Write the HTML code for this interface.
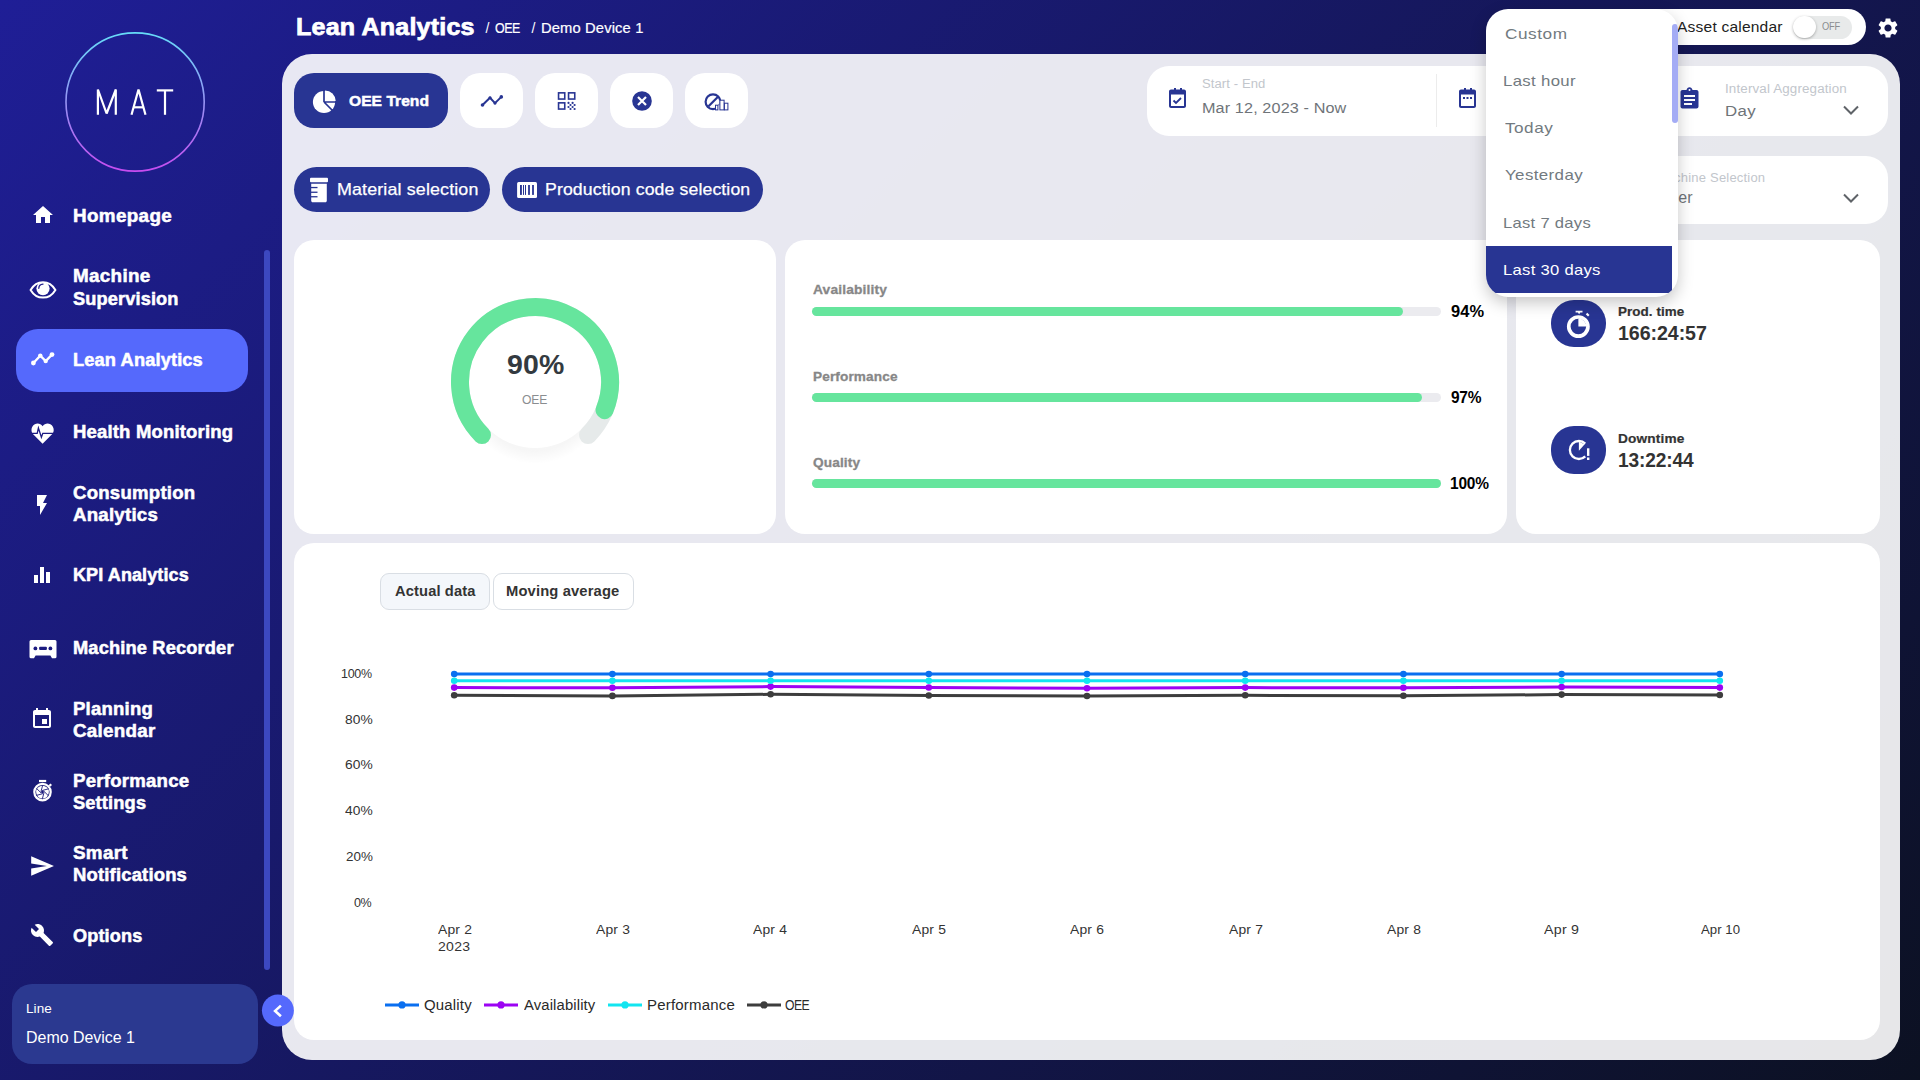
<!DOCTYPE html><html><head><meta charset="utf-8"><style>
html,body{margin:0;padding:0;}
html{width:1920px;height:1080px;}
body{width:1920px;height:1080px;overflow:hidden;position:relative;font-family:"Liberation Sans", sans-serif;
background:linear-gradient(135deg,#1f1e96 0%,#0c1122 100%);}
.t{position:absolute;line-height:1;white-space:nowrap;}
.r{position:absolute;}
</style></head><body>
<svg class="r" style="left:60px;top:27px;" width="150" height="150" viewBox="0 0 150 150"><defs><linearGradient id="lg" x1="0" y1="0" x2="0" y2="1"><stop offset="0" stop-color="#66dcf8"/><stop offset="1" stop-color="#c74cf0"/></linearGradient></defs>
<circle cx="75.1" cy="75" r="69.1" fill="none" stroke="url(#lg)" stroke-width="1.6"/>
<g fill="none" stroke="#fff" stroke-width="2.2" stroke-linejoin="bevel">
<polyline points="37.9,87.8 37.9,62.5 46.6,86.5 55.8,62.5 55.8,87.8" transform="translate(0,0)"/>
<polyline points="71.5,87.8 78.5,62.5 85.5,87.8"/>
<line x1="74" y1="80.3" x2="83" y2="80.3"/>
<line x1="96.8" y1="63.4" x2="113.2" y2="63.4"/>
<line x1="105" y1="63.4" x2="105" y2="87.8"/>
</g></svg>
<div class="r" style="left:16px;top:329px;width:232px;height:63px;background:#5569fc;border-radius:22px;"></div>
<div class="t" style="left:72.58px;top:208.19px;font-size:17.5px;font-weight:700;color:#fff;letter-spacing:0.317px;transform:scaleX(1.0766);transform-origin:0 0;-webkit-text-stroke:0.5px #fff;">Homepage</div>
<div class="t" style="left:72.58px;top:268.49px;font-size:17.5px;font-weight:700;color:#fff;letter-spacing:0.289px;transform:scaleX(1.0762);transform-origin:0 0;-webkit-text-stroke:0.5px #fff;">Machine</div>
<div class="t" style="left:72.59px;top:290.69px;font-size:17.5px;font-weight:700;color:#fff;letter-spacing:0.130px;transform:scaleX(1.0395);transform-origin:0 0;-webkit-text-stroke:0.5px #fff;">Supervision</div>
<div class="t" style="left:72.59px;top:352.09px;font-size:17.5px;font-weight:700;color:#fff;letter-spacing:0.130px;transform:scaleX(1.0418);transform-origin:0 0;-webkit-text-stroke:0.5px #fff;">Lean Analytics</div>
<div class="t" style="left:72.59px;top:423.69px;font-size:17.5px;font-weight:700;color:#fff;letter-spacing:0.170px;transform:scaleX(1.0562);transform-origin:0 0;-webkit-text-stroke:0.5px #fff;">Health Monitoring</div>
<div class="t" style="left:72.58px;top:484.89px;font-size:17.5px;font-weight:700;color:#fff;letter-spacing:0.228px;transform:scaleX(1.0623);transform-origin:0 0;-webkit-text-stroke:0.5px #fff;">Consumption</div>
<div class="t" style="left:72.58px;top:506.99px;font-size:17.5px;font-weight:700;color:#fff;letter-spacing:0.209px;transform:scaleX(1.0665);transform-origin:0 0;-webkit-text-stroke:0.5px #fff;">Analytics</div>
<div class="t" style="left:72.59px;top:567.49px;font-size:17.5px;font-weight:700;color:#fff;letter-spacing:0.092px;transform:scaleX(1.0303);transform-origin:0 0;-webkit-text-stroke:0.5px #fff;">KPI Analytics</div>
<div class="t" style="left:72.59px;top:639.69px;font-size:17.5px;font-weight:700;color:#fff;letter-spacing:0.144px;transform:scaleX(1.0431);transform-origin:0 0;-webkit-text-stroke:0.5px #fff;">Machine Recorder</div>
<div class="t" style="left:72.58px;top:700.69px;font-size:17.5px;font-weight:700;color:#fff;letter-spacing:0.205px;transform:scaleX(1.0600);transform-origin:0 0;-webkit-text-stroke:0.5px #fff;">Planning</div>
<div class="t" style="left:72.58px;top:722.69px;font-size:17.5px;font-weight:700;color:#fff;letter-spacing:0.258px;transform:scaleX(1.0741);transform-origin:0 0;-webkit-text-stroke:0.5px #fff;">Calendar</div>
<div class="t" style="left:72.58px;top:772.69px;font-size:17.5px;font-weight:700;color:#fff;letter-spacing:0.221px;transform:scaleX(1.0631);transform-origin:0 0;-webkit-text-stroke:0.5px #fff;">Performance</div>
<div class="t" style="left:72.59px;top:794.69px;font-size:17.5px;font-weight:700;color:#fff;letter-spacing:0.140px;transform:scaleX(1.0432);transform-origin:0 0;-webkit-text-stroke:0.5px #fff;">Settings</div>
<div class="t" style="left:72.58px;top:844.69px;font-size:17.5px;font-weight:700;color:#fff;letter-spacing:0.301px;transform:scaleX(1.0741);transform-origin:0 0;-webkit-text-stroke:0.5px #fff;">Smart</div>
<div class="t" style="left:72.59px;top:866.69px;font-size:17.5px;font-weight:700;color:#fff;letter-spacing:0.160px;transform:scaleX(1.0554);transform-origin:0 0;-webkit-text-stroke:0.5px #fff;">Notifications</div>
<div class="t" style="left:72.59px;top:927.89px;font-size:17.5px;font-weight:700;color:#fff;letter-spacing:0.131px;transform:scaleX(1.0361);transform-origin:0 0;-webkit-text-stroke:0.5px #fff;">Options</div>
<svg class="r" style="left:30.5px;top:202.6px;" width="24" height="24" viewBox="0 0 24 24"><path fill="#fff" d="M10 20v-6h4v6h5v-8h3L12 3 2 12h3v8z"/></svg>
<svg class="r" style="left:28.5px;top:279.5px;" width="28" height="20" viewBox="0 0 28 20"><path d="M14 2.2C8.5 2.2 4 5.8 1.6 9.9 4 14 8.5 17.6 14 17.6s10-3.6 12.4-7.7C24 5.8 19.5 2.2 14 2.2z" fill="none" stroke="#fff" stroke-width="2"/><circle cx="14" cy="8.6" r="6.6" fill="#fff"/><path d="M9.8 8.3A4.4 4.4 0 0 1 14 4.1" fill="none" stroke="#1e1c8c" stroke-width="1.3" stroke-linecap="round"/></svg>
<svg class="r" style="left:30px;top:350px;" width="26" height="16" viewBox="0 0 26 16"><polyline points="3.4,13 10.3,5.6 15.7,11.1 22,4.6" fill="none" stroke="#fff" stroke-width="2.3"/><circle cx="3.4" cy="13" r="2.4" fill="#fff"/><circle cx="10.3" cy="5.6" r="2.2" fill="#fff"/><circle cx="15.7" cy="11.1" r="2.2" fill="#fff"/><circle cx="22" cy="4.6" r="2.4" fill="#fff"/></svg>
<svg class="r" style="left:31px;top:423px;" width="24" height="22" viewBox="0 0 24 22"><path fill="#fff" d="M11.6 20.7L2.4 11.6C-0.6 8.6 0 3.3 3.8 1.2 6.8-0.4 9.8 0.8 11.6 3.2 13.4 0.8 16.4-0.4 19.4 1.2 23.2 3.3 23.8 8.6 20.8 11.6z"/><polyline points="-1,10.3 6.2,10.3 7.4,5 10.4,14.2 11.8,10.3 25,10.3" fill="none" stroke="#1c1b82" stroke-width="1.3"/></svg>
<svg class="r" style="left:30px;top:493px;" width="24" height="24" viewBox="0 0 24 24"><path fill="#fff" d="M7 2v11h3v9l7-12h-4l4-8z" transform="translate(0,0) scale(1)"/></svg>
<svg class="r" style="left:29.7px;top:563.2px;" width="24" height="24" viewBox="0 0 24 24"><path fill="#fff" d="M10 20h4V4h-4v16zm-6 0h4v-8H4v8zM16 9v11h4V9h-4z"/></svg>
<svg class="r" style="left:28.5px;top:639.8px;" width="28" height="19" viewBox="0 0 28 19"><path fill="#fff" d="M2 0.1H26A1.5 1.5 0 0 1 27.5 1.6V16.7A1.5 1.5 0 0 1 26 18.2H23L21.4 15.6H6.6L5 18.2H2A1.5 1.5 0 0 1 0.5 16.7V1.6A1.5 1.5 0 0 1 2 0.1z"/><g fill="#1c1b80"><circle cx="6.4" cy="8.4" r="1.9"/><rect x="10.1" y="6.7" width="7.8" height="3.4" rx="1"/><circle cx="21.4" cy="8.4" r="1.9"/></g></svg>
<svg class="r" style="left:30.2px;top:707px;" width="24" height="24" viewBox="0 0 24 24"><path fill="#fff" d="M17 12h-5v5h5v-5zM16 1v2H8V1H6v2H5c-1.11 0-1.99.9-1.99 2L3 19c0 1.1.89 2 2 2h14c1.1 0 2-.9 2-2V5c0-1.1-.9-2-2-2h-1V1h-2zm3 18H5V8h14v11z"/></svg>
<svg class="r" style="left:31px;top:778px;" width="24" height="25" viewBox="0 0 24 25"><rect x="8" y="1.9" width="7.2" height="2.2" fill="#fff"/><path d="M17.6 7.2l1.8-1.8 1.6 1.6-1.8 1.8z" fill="#fff"/><circle cx="11.5" cy="14.1" r="8.2" fill="none" stroke="#fff" stroke-width="2.2"/><circle cx="11.5" cy="14.1" r="6.4" fill="#fff"/><g stroke="#1c1b7c" stroke-width="0.9"><line x1="13.05" y1="14.51" x2="11.34" y2="20.89"/><line x1="11.91" y1="15.65" x2="5.54" y2="17.35"/><line x1="10.37" y1="15.23" x2="5.70" y2="10.56"/><line x1="9.95" y1="13.69" x2="11.66" y2="7.31"/><line x1="11.09" y1="12.55" x2="17.46" y2="10.85"/><line x1="12.63" y1="12.97" x2="17.30" y2="17.64"/></g><circle cx="11.5" cy="14.1" r="1.4" fill="#1c1b7c"/></svg>
<svg class="r" style="left:28.9px;top:852.8px;" width="26" height="26" viewBox="0 0 26 26"><path fill="#fff" transform="scale(1.085)" d="M2.01 21L23 12 2.01 3 2 9.6l14.5 2.4L2 14.4z"/></svg>
<svg class="r" style="left:29.8px;top:922.6px;" width="24" height="24" viewBox="0 0 24 24"><path fill="#fff" d="M22.7 19l-9.1-9.1c.9-2.3.4-5-1.5-6.9-2-2-5-2.4-7.4-1.3L9 6 6 9 1.6 4.7C.4 7.1.9 10.1 2.9 12.1c1.9 1.9 4.6 2.4 6.9 1.5l9.1 9.1c.4.4 1 .4 1.4 0l2.3-2.3c.5-.4.5-1.1.1-1.4z"/></svg>
<div class="r" style="left:264px;top:250px;width:6px;height:720px;background:#3c48c0;border-radius:3px;"></div>
<div class="r" style="left:12px;top:984px;width:246px;height:80px;background:#2b3990;border-radius:20px;"></div>
<div class="t" style="left:26.34px;top:1002.40px;font-size:13px;font-weight:400;color:#fff;letter-spacing:0.098px;transform:scaleX(1.0389);transform-origin:0 0;">Line</div>
<div class="t" style="left:26.39px;top:1030.16px;font-size:16px;font-weight:400;color:#fff;letter-spacing:-0.008px;transform:scaleX(0.9972);transform-origin:0 0;">Demo Device 1</div>
<div class="t" style="left:296.33px;top:14.88px;font-size:24px;font-weight:700;color:#fff;letter-spacing:0.186px;transform:scaleX(1.0441);transform-origin:0 0;-webkit-text-stroke:0.75px #fff;">Lean Analytics</div>
<div class="t" style="left:485.50px;top:21.15px;font-size:14px;font-weight:400;color:#fff;">/</div>
<div class="t" style="left:494.68px;top:21.15px;font-size:14px;font-weight:400;color:#fff;letter-spacing:-0.570px;transform:scaleX(0.8866);transform-origin:0 0;-webkit-text-stroke:0.2px #fff;">OEE</div>
<div class="t" style="left:531.50px;top:21.15px;font-size:14px;font-weight:400;color:#fff;">/</div>
<div class="t" style="left:540.76px;top:21.15px;font-size:14px;font-weight:400;color:#fff;letter-spacing:0.134px;transform:scaleX(1.0517);transform-origin:0 0;-webkit-text-stroke:0.2px #fff;">Demo Device 1</div>
<div class="r" style="left:282px;top:54px;width:1618px;height:1006px;background:rgba(255,255,255,0.9);border-radius:30px;"></div>
<div class="r" style="left:294px;top:73px;width:154px;height:55px;background:#283593;border-radius:20px;"></div>
<svg class="r" style="left:311px;top:88.6px;" width="27" height="27" viewBox="0 0 27 27"><circle cx="13" cy="13" r="11.1" fill="#fff"/><g stroke="#283593" stroke-width="1.7" fill="none"><path d="M13 13V0.5M13 13H25.5M13 13L22.5 22.5"/></g><path d="M14 12V1.4A11 11 0 0 1 24.7 12z" fill="#fff"/></svg>
<div class="t" style="left:348.79px;top:93.38px;font-size:15.5px;font-weight:700;color:#fff;letter-spacing:0.022px;transform:scaleX(1.0067);transform-origin:0 0;-webkit-text-stroke:0.5px #fff;">OEE Trend</div>
<div class="r" style="left:460px;top:73px;width:63px;height:55px;background:#fff;border-radius:20px;"></div>
<div class="r" style="left:535px;top:73px;width:63px;height:55px;background:#fff;border-radius:20px;"></div>
<div class="r" style="left:610px;top:73px;width:63px;height:55px;background:#fff;border-radius:20px;"></div>
<div class="r" style="left:685px;top:73px;width:63px;height:55px;background:#fff;border-radius:20px;"></div>
<svg class="r" style="left:480px;top:89px;" width="24" height="24" viewBox="0 0 24 24"><polyline points="2.5,16 10,8.75 15,14.1 21.3,7.9" fill="none" stroke="#283593" stroke-width="2"/><circle cx="2.5" cy="16" r="1.8" fill="#283593"/><circle cx="10" cy="8.75" r="1.6" fill="#283593"/><circle cx="15" cy="14.1" r="1.6" fill="#283593"/><circle cx="21.3" cy="7.9" r="1.8" fill="#283593"/></svg>
<svg class="r" style="left:556px;top:91px;" width="22" height="22" viewBox="0 0 22 22"><g fill="none" stroke="#283593" stroke-width="1.6"><rect x="2.55" y="1.85" width="6.2" height="6.2"/><rect x="12.55" y="1.85" width="6.2" height="6.2"/><rect x="2.55" y="11.85" width="6.2" height="6.2"/></g><g fill="#283593"><circle cx="12.5" cy="11.9" r="1.1"/><circle cx="16.6" cy="11.9" r="1.1"/><circle cx="14.5" cy="14" r="1.1"/><circle cx="18.6" cy="14" r="1.1"/><circle cx="12.5" cy="16" r="1.1"/><circle cx="16.6" cy="16" r="1.1"/><circle cx="14.5" cy="18" r="1.1"/><circle cx="18.6" cy="18" r="1.1"/></g></svg>
<svg class="r" style="left:631px;top:90px;" width="22" height="22" viewBox="0 0 22 22"><circle cx="11" cy="11" r="9.8" fill="#283593"/><path d="M7 7l8 8M15 7l-8 8" stroke="#fff" stroke-width="2.2"/></svg>
<svg class="r" style="left:703px;top:90px;" width="28" height="24" viewBox="0 0 28 24"><circle cx="10" cy="11.8" r="7.4" fill="none" stroke="#283593" stroke-width="2.2"/><line x1="5.3" y1="16.6" x2="15" y2="6.8" stroke="#283593" stroke-width="2.2"/><path d="M12 15.2H16.4V10.2H21.6V13.2H25.4V20.4H12z" fill="#fff"/><g fill="none" stroke="#283593" stroke-width="1"><rect x="12.5" y="15.2" width="2.4" height="4.7"/><rect x="16.9" y="10.2" width="4.2" height="9.7"/><rect x="21.4" y="13.2" width="3.5" height="6.7"/></g></svg>
<div class="r" style="left:294px;top:167px;width:196px;height:45px;background:#283593;border-radius:22.5px;"></div>
<svg class="r" style="left:309px;top:176px;" width="20" height="28" viewBox="0 0 20 28"><rect x="1" y="1.8" width="18" height="4.5" rx="1" fill="#fff"/><path fill="#fff" d="M2.2 7.7h15.6v17c0 .8-.7 1.5-1.5 1.5H3.7c-.8 0-1.5-.7-1.5-1.5z"/><g fill="#283593"><rect x="2" y="10.9" width="6.5" height="1.3"/><rect x="2" y="15.6" width="6.5" height="1.3"/><rect x="2" y="20.1" width="6.5" height="1.3"/></g></svg>
<div class="t" style="left:336.97px;top:181.36px;font-size:17px;font-weight:400;color:#fff;letter-spacing:0.129px;transform:scaleX(1.0511);transform-origin:0 0;-webkit-text-stroke:0.25px #fff;">Material selection</div>
<div class="r" style="left:502px;top:167px;width:261px;height:45px;background:#283593;border-radius:22.5px;"></div>
<svg class="r" style="left:517px;top:182px;" width="21" height="17" viewBox="0 0 21 17"><rect x="0.1" y="0" width="19.9" height="16" rx="1.5" fill="#fff"/><g fill="#283593"><rect x="3" y="3" width="1.9" height="9.9"/><rect x="6" y="3" width="1" height="9.9"/><rect x="8" y="3" width="1" height="9.9"/><rect x="11.1" y="3" width="1.8" height="9.9"/><rect x="15.1" y="3" width="1.8" height="9.9"/></g></svg>
<div class="t" style="left:544.98px;top:181.36px;font-size:17px;font-weight:400;color:#fff;letter-spacing:0.107px;transform:scaleX(1.0403);transform-origin:0 0;-webkit-text-stroke:0.25px #fff;">Production code selection</div>
<div class="r" style="left:1147px;top:66px;width:741px;height:70px;background:#fff;border-radius:22px;"></div>
<svg class="r" style="left:1167px;top:87px;" width="22" height="22" viewBox="0 0 22 22"><path fill="#283593" d="M5 2.5h2V1h2v1.5h4V1h2v1.5h2c1.1 0 2 .9 2 2V19c0 1.1-.9 2-2 2H4c-1.1 0-2-.9-2-2V4.5c0-1.1.9-2 2-2zm-1 5V19h13V7.5z"/><path d="M6.5 13.5l2.5 2.5 5-5" fill="none" stroke="#283593" stroke-width="1.8"/></svg>
<div class="t" style="left:1202.35px;top:77.82px;font-size:12.5px;font-weight:400;color:#c2c6cc;letter-spacing:0.086px;transform:scaleX(1.0449);transform-origin:0 0;">Start - End</div>
<div class="t" style="left:1202.35px;top:99.98px;font-size:15.5px;font-weight:400;color:#6f7479;letter-spacing:0.117px;transform:scaleX(1.0447);transform-origin:0 0;">Mar 12, 2023 - Now</div>
<div class="r" style="left:1436px;top:74px;width:1px;height:53px;background:#ececec;border-radius:0px;"></div>
<svg class="r" style="left:1457px;top:87px;" width="22" height="22" viewBox="0 0 22 22"><path fill="#283593" d="M5 2.5h2V1h2v1.5h4V1h2v1.5h2c1.1 0 2 .9 2 2V19c0 1.1-.9 2-2 2H4c-1.1 0-2-.9-2-2V4.5c0-1.1.9-2 2-2zm-1 5V19h13V7.5z"/><g fill="#283593"><rect x="6" y="10" width="2" height="2"/><rect x="9.5" y="10" width="2" height="2"/><rect x="13" y="10" width="2" height="2"/></g></svg>
<svg class="r" style="left:1679px;top:86px;" width="22" height="24" viewBox="0 0 22 24"><path fill="#283593" d="M3.5 4h4c.3-1.6 1.6-2.8 3-2.8s2.7 1.2 3 2.8h4c1.1 0 2 .9 2 2v14.5c0 1.1-.9 2-2 2h-14c-1.1 0-2-.9-2-2V6c0-1.1.9-2 2-2z"/><circle cx="10.5" cy="4" r="1" fill="#fff"/><g fill="#fff"><rect x="5" y="9" width="11" height="2"/><rect x="5" y="13" width="11" height="2"/><rect x="5" y="17" width="8" height="2"/></g></svg>
<div class="t" style="left:1725.33px;top:82.72px;font-size:12.5px;font-weight:400;color:#c2c6cc;letter-spacing:0.133px;transform:scaleX(1.0708);transform-origin:0 0;">Interval Aggregation</div>
<div class="t" style="left:1725.32px;top:102.68px;font-size:15.5px;font-weight:400;color:#6f7479;letter-spacing:0.372px;transform:scaleX(1.0849);transform-origin:0 0;">Day</div>
<svg class="r" style="left:1842px;top:104px;" width="18" height="12" viewBox="0 0 18 12"><polyline points="2,2.5 9,9.5 16,2.5" fill="none" stroke="#5f6368" stroke-width="2"/></svg>
<div class="r" style="left:1560px;top:156px;width:328px;height:68px;background:#fff;border-radius:22px;"></div>
<div class="t" style="left:1565.30px;top:171.00px;font-size:13px;font-weight:400;color:#c2c6cc;letter-spacing:0.2px;width:200px;text-align:right;">Machine Selection</div>
<div class="t" style="left:1493.00px;top:189.76px;font-size:16px;font-weight:400;color:#6f7479;letter-spacing:0.3px;width:200px;text-align:right;">Filler</div>
<svg class="r" style="left:1842px;top:192px;" width="18" height="12" viewBox="0 0 18 12"><polyline points="2,2.5 9,9.5 16,2.5" fill="none" stroke="#5f6368" stroke-width="2"/></svg>
<div class="r" style="left:294px;top:240px;width:482px;height:294px;background:#fff;border-radius:20px;"></div>
<div class="r" style="left:785px;top:240px;width:722px;height:294px;background:#fff;border-radius:20px;"></div>
<div class="r" style="left:1516px;top:240px;width:364px;height:294px;background:#fff;border-radius:20px;"></div>
<div class="r" style="left:294px;top:543px;width:1586px;height:497px;background:#fff;border-radius:20px;"></div>
<svg class="r" style="left:0;top:0" width="1920" height="1080" viewBox="0 0 1920 1080">
<defs><radialGradient id="gs" cx="0.5" cy="0.5" r="0.5"><stop offset="0.82" stop-color="#000" stop-opacity="0.035"/><stop offset="1" stop-color="#000" stop-opacity="0"/></radialGradient></defs>
<circle cx="535" cy="392" r="72" fill="url(#gs)"/>
<circle cx="535" cy="382" r="66" fill="#fff"/>
<path d="M481.97 435.03 A75 75 0 1 1 588.03 435.03" fill="none" stroke="#e6eaea" stroke-width="18" stroke-linecap="round"/>
<path d="M481.97 435.03 A75 75 0 1 1 604.54 410.10" fill="none" stroke="#66e59d" stroke-width="18" stroke-linecap="round"/>
</svg>
<div class="t" style="left:506.59px;top:351.30px;font-size:28px;font-weight:700;color:#333a40;letter-spacing:0.149px;transform:scaleX(1.0163);transform-origin:0 0;">90%</div>
<div class="t" style="left:522.01px;top:393.62px;font-size:12.5px;font-weight:400;color:#8a8d90;letter-spacing:-0.127px;transform:scaleX(0.9710);transform-origin:0 0;">OEE</div>
<div class="t" style="left:812.58px;top:282.90px;font-size:13px;font-weight:700;color:#878787;letter-spacing:0.126px;transform:scaleX(1.0622);transform-origin:0 0;-webkit-text-stroke:0.3px #878787;">Availability</div>
<div class="r" style="left:811.8px;top:306.9px;width:629px;height:9px;background:#ebebef;border-radius:4.5px;"></div>
<div class="r" style="left:811.8px;top:306.9px;width:590.8px;height:9px;background:#66e59d;border-radius:4.5px;"></div>
<div class="t" style="left:1451.00px;top:303.10px;font-size:16.3px;font-weight:700;color:#000;letter-spacing:0.050px;transform:scaleX(1.0094);transform-origin:0 0;">94%</div>
<div class="t" style="left:812.59px;top:370.30px;font-size:13px;font-weight:700;color:#878787;letter-spacing:0.122px;transform:scaleX(1.0471);transform-origin:0 0;-webkit-text-stroke:0.3px #878787;">Performance</div>
<div class="r" style="left:811.8px;top:393.0px;width:629px;height:9px;background:#ebebef;border-radius:4.5px;"></div>
<div class="r" style="left:811.8px;top:393.0px;width:610.0px;height:9px;background:#66e59d;border-radius:4.5px;"></div>
<div class="t" style="left:1451.00px;top:389.20px;font-size:16.3px;font-weight:700;color:#000;letter-spacing:-0.269px;transform:scaleX(0.9504);transform-origin:0 0;">97%</div>
<div class="t" style="left:812.59px;top:456.30px;font-size:13px;font-weight:700;color:#878787;letter-spacing:0.122px;transform:scaleX(1.0507);transform-origin:0 0;-webkit-text-stroke:0.3px #878787;">Quality</div>
<div class="r" style="left:811.8px;top:478.5px;width:629px;height:9px;background:#ebebef;border-radius:4.5px;"></div>
<div class="r" style="left:811.8px;top:478.5px;width:629.2px;height:9px;background:#66e59d;border-radius:4.5px;"></div>
<div class="t" style="left:1450.05px;top:474.70px;font-size:16.3px;font-weight:700;color:#000;letter-spacing:-0.231px;transform:scaleX(0.9502);transform-origin:0 0;">100%</div>
<div class="r" style="left:1551px;top:300px;width:55px;height:47px;background:#283593;border-radius:23px;"></div>
<svg class="r" style="left:1564px;top:306px;" width="30" height="34" viewBox="0 0 30 34"><path d="M11.6 4.8h6.9v1.8h-2.2l-1.2 1.6-1.2-1.6h-2.3z" fill="#fff"/><path d="M21.8 8.2l1.5-1.5 2.2 2.2-1.5 1.5z" fill="#fff"/><circle cx="14.35" cy="20.60" r="9.6" fill="none" stroke="#fff" stroke-width="3.7"/><path d="M14.35 20.60V12.60A8 8 0 0 1 22.35 20.60z" fill="#fff"/></svg>
<div class="t" style="left:1617.98px;top:305.40px;font-size:13px;font-weight:700;color:#333;letter-spacing:0.074px;transform:scaleX(1.0320);transform-origin:0 0;-webkit-text-stroke:0.2px #333;">Prod. time</div>
<div class="t" style="left:1618.01px;top:323.07px;font-size:20px;font-weight:700;color:#333;letter-spacing:-0.073px;transform:scaleX(0.9808);transform-origin:0 0;">166:24:57</div>
<div class="r" style="left:1551px;top:426px;width:55px;height:48px;background:#283593;border-radius:23px;"></div>
<svg class="r" style="left:1564px;top:436px;" width="28" height="28" viewBox="0 0 28 28"><path d="M21.26 20.36A9 9 0 1 1 21.26 7.64" fill="none" stroke="#fff" stroke-width="2.3"/><path d="M14.90 14.80L14.90 5.80L20.70 8.20z" fill="#fff"/><rect x="23" y="12.3" width="2.4" height="7.6" fill="#fff"/><rect x="23" y="21.5" width="2.4" height="2.5" fill="#fff"/></svg>
<div class="t" style="left:1617.97px;top:432.20px;font-size:13px;font-weight:700;color:#333;letter-spacing:0.150px;transform:scaleX(1.0516);transform-origin:0 0;-webkit-text-stroke:0.2px #333;">Downtime</div>
<div class="t" style="left:1618.02px;top:450.37px;font-size:20px;font-weight:700;color:#333;letter-spacing:-0.164px;transform:scaleX(0.9575);transform-origin:0 0;">13:22:44</div>
<div class="r" style="left:380px;top:573px;width:110px;height:37px;background:#f4f7fb;border-radius:9px;box-sizing:border-box;border:1px solid #d9dee4;"></div>
<div class="r" style="left:493px;top:573px;width:141px;height:37px;background:#fff;border-radius:9px;box-sizing:border-box;border:1px solid #d9dee4;"></div>
<div class="t" style="left:394.59px;top:584.35px;font-size:14px;font-weight:700;color:#333;letter-spacing:0.122px;transform:scaleX(1.0489);transform-origin:0 0;">Actual data</div>
<div class="t" style="left:505.95px;top:584.35px;font-size:14px;font-weight:700;color:#333;letter-spacing:0.139px;transform:scaleX(1.0524);transform-origin:0 0;">Moving average</div>
<div class="t" style="left:341.41px;top:666.77px;font-size:13.5px;font-weight:400;color:#333;letter-spacing:-0.295px;transform:scaleX(0.9240);transform-origin:0 0;">100%</div>
<div class="t" style="left:345.19px;top:712.57px;font-size:13.5px;font-weight:400;color:#333;letter-spacing:0.087px;transform:scaleX(1.0201);transform-origin:0 0;">80%</div>
<div class="t" style="left:345.19px;top:758.37px;font-size:13.5px;font-weight:400;color:#333;letter-spacing:0.087px;transform:scaleX(1.0201);transform-origin:0 0;">60%</div>
<div class="t" style="left:345.19px;top:804.17px;font-size:13.5px;font-weight:400;color:#333;letter-spacing:0.087px;transform:scaleX(1.0201);transform-origin:0 0;">40%</div>
<div class="t" style="left:346.00px;top:849.97px;font-size:13.5px;font-weight:400;color:#333;letter-spacing:-0.025px;transform:scaleX(0.9942);transform-origin:0 0;">20%</div>
<div class="t" style="left:354.37px;top:895.77px;font-size:13.5px;font-weight:400;color:#333;letter-spacing:-0.493px;transform:scaleX(0.9279);transform-origin:0 0;">0%</div>
<div class="t" style="left:437.62px;top:923.20px;font-size:13px;font-weight:400;color:#333;letter-spacing:0.169px;transform:scaleX(1.0670);transform-origin:0 0;">Apr 2</div>
<div class="t" style="left:596.03px;top:923.20px;font-size:13px;font-weight:400;color:#333;letter-spacing:0.169px;transform:scaleX(1.0670);transform-origin:0 0;">Apr 3</div>
<div class="t" style="left:753.37px;top:923.20px;font-size:13px;font-weight:400;color:#333;letter-spacing:0.169px;transform:scaleX(1.0670);transform-origin:0 0;">Apr 4</div>
<div class="t" style="left:911.78px;top:923.20px;font-size:13px;font-weight:400;color:#333;letter-spacing:0.169px;transform:scaleX(1.0670);transform-origin:0 0;">Apr 5</div>
<div class="t" style="left:1070.20px;top:923.20px;font-size:13px;font-weight:400;color:#333;letter-spacing:0.169px;transform:scaleX(1.0670);transform-origin:0 0;">Apr 6</div>
<div class="t" style="left:1228.62px;top:923.20px;font-size:13px;font-weight:400;color:#333;letter-spacing:0.169px;transform:scaleX(1.0670);transform-origin:0 0;">Apr 7</div>
<div class="t" style="left:1387.03px;top:923.20px;font-size:13px;font-weight:400;color:#333;letter-spacing:0.169px;transform:scaleX(1.0670);transform-origin:0 0;">Apr 8</div>
<div class="t" style="left:1544.36px;top:923.20px;font-size:13px;font-weight:400;color:#333;letter-spacing:0.227px;transform:scaleX(1.0936);transform-origin:0 0;">Apr 9</div>
<div class="t" style="left:1700.89px;top:923.20px;font-size:13px;font-weight:400;color:#333;letter-spacing:0.035px;transform:scaleX(1.0138);transform-origin:0 0;">Apr 10</div>
<div class="t" style="left:438.36px;top:939.90px;font-size:13px;font-weight:400;color:#333;letter-spacing:0.241px;transform:scaleX(1.0793);transform-origin:0 0;">2023</div>
<svg class="r" style="left:0;top:0" width="1920" height="1080"><polyline points="454.20,695.30 612.40,695.90 770.60,694.30 928.80,695.50 1087.00,696.00 1245.20,695.30 1403.40,695.80 1561.60,694.60 1719.80,695.00" fill="none" stroke="#3d3d3d" stroke-width="3" stroke-linejoin="round"/><circle cx="454.20" cy="695.30" r="3.3" fill="#3d3d3d"/><circle cx="612.40" cy="695.90" r="3.3" fill="#3d3d3d"/><circle cx="770.60" cy="694.30" r="3.3" fill="#3d3d3d"/><circle cx="928.80" cy="695.50" r="3.3" fill="#3d3d3d"/><circle cx="1087.00" cy="696.00" r="3.3" fill="#3d3d3d"/><circle cx="1245.20" cy="695.30" r="3.3" fill="#3d3d3d"/><circle cx="1403.40" cy="695.80" r="3.3" fill="#3d3d3d"/><circle cx="1561.60" cy="694.60" r="3.3" fill="#3d3d3d"/><circle cx="1719.80" cy="695.00" r="3.3" fill="#3d3d3d"/><polyline points="454.20,687.60 612.40,687.80 770.60,686.60 928.80,687.50 1087.00,688.20 1245.20,687.60 1403.40,687.80 1561.60,687.00 1719.80,687.60" fill="none" stroke="#9c03f3" stroke-width="3" stroke-linejoin="round"/><circle cx="454.20" cy="687.60" r="3.3" fill="#9c03f3"/><circle cx="612.40" cy="687.80" r="3.3" fill="#9c03f3"/><circle cx="770.60" cy="686.60" r="3.3" fill="#9c03f3"/><circle cx="928.80" cy="687.50" r="3.3" fill="#9c03f3"/><circle cx="1087.00" cy="688.20" r="3.3" fill="#9c03f3"/><circle cx="1245.20" cy="687.60" r="3.3" fill="#9c03f3"/><circle cx="1403.40" cy="687.80" r="3.3" fill="#9c03f3"/><circle cx="1561.60" cy="687.00" r="3.3" fill="#9c03f3"/><circle cx="1719.80" cy="687.60" r="3.3" fill="#9c03f3"/><polyline points="454.20,680.70 612.40,680.70 770.60,680.70 928.80,680.70 1087.00,680.70 1245.20,680.70 1403.40,680.70 1561.60,680.70 1719.80,680.70" fill="none" stroke="#12e5f0" stroke-width="3" stroke-linejoin="round"/><circle cx="454.20" cy="680.70" r="3.3" fill="#12e5f0"/><circle cx="612.40" cy="680.70" r="3.3" fill="#12e5f0"/><circle cx="770.60" cy="680.70" r="3.3" fill="#12e5f0"/><circle cx="928.80" cy="680.70" r="3.3" fill="#12e5f0"/><circle cx="1087.00" cy="680.70" r="3.3" fill="#12e5f0"/><circle cx="1245.20" cy="680.70" r="3.3" fill="#12e5f0"/><circle cx="1403.40" cy="680.70" r="3.3" fill="#12e5f0"/><circle cx="1561.60" cy="680.70" r="3.3" fill="#12e5f0"/><circle cx="1719.80" cy="680.70" r="3.3" fill="#12e5f0"/><polyline points="454.20,674.00 612.40,674.00 770.60,674.00 928.80,674.00 1087.00,674.00 1245.20,674.00 1403.40,674.00 1561.60,674.00 1719.80,674.00" fill="none" stroke="#0a6ff0" stroke-width="3" stroke-linejoin="round"/><circle cx="454.20" cy="674.00" r="3.3" fill="#0a6ff0"/><circle cx="612.40" cy="674.00" r="3.3" fill="#0a6ff0"/><circle cx="770.60" cy="674.00" r="3.3" fill="#0a6ff0"/><circle cx="928.80" cy="674.00" r="3.3" fill="#0a6ff0"/><circle cx="1087.00" cy="674.00" r="3.3" fill="#0a6ff0"/><circle cx="1245.20" cy="674.00" r="3.3" fill="#0a6ff0"/><circle cx="1403.40" cy="674.00" r="3.3" fill="#0a6ff0"/><circle cx="1561.60" cy="674.00" r="3.3" fill="#0a6ff0"/><circle cx="1719.80" cy="674.00" r="3.3" fill="#0a6ff0"/></svg>
<svg class="r" style="left:384.7px;top:999px;" width="34" height="12" viewBox="0 0 34 12"><line x1="0" y1="5.9" x2="34" y2="5.9" stroke="#0a6ff0" stroke-width="3"/><circle cx="17" cy="5.9" r="3.6" fill="#0a6ff0"/></svg>
<div class="t" style="left:424.37px;top:998.05px;font-size:14px;font-weight:400;color:#2a2a2a;letter-spacing:0.161px;transform:scaleX(1.0690);transform-origin:0 0;">Quality</div>
<svg class="r" style="left:483.8px;top:999px;" width="34" height="12" viewBox="0 0 34 12"><line x1="0" y1="5.9" x2="34" y2="5.9" stroke="#9c03f3" stroke-width="3"/><circle cx="17" cy="5.9" r="3.6" fill="#9c03f3"/></svg>
<div class="t" style="left:524.03px;top:998.05px;font-size:14px;font-weight:400;color:#2a2a2a;letter-spacing:0.119px;transform:scaleX(1.0599);transform-origin:0 0;">Availability</div>
<svg class="r" style="left:607.7px;top:999px;" width="34" height="12" viewBox="0 0 34 12"><line x1="0" y1="5.9" x2="34" y2="5.9" stroke="#12e5f0" stroke-width="3"/><circle cx="17" cy="5.9" r="3.6" fill="#12e5f0"/></svg>
<div class="t" style="left:646.75px;top:998.05px;font-size:14px;font-weight:400;color:#2a2a2a;letter-spacing:0.184px;transform:scaleX(1.0713);transform-origin:0 0;">Performance</div>
<svg class="r" style="left:746.8px;top:999px;" width="34" height="12" viewBox="0 0 34 12"><line x1="0" y1="5.9" x2="34" y2="5.9" stroke="#3d3d3d" stroke-width="3"/><circle cx="17" cy="5.9" r="3.6" fill="#3d3d3d"/></svg>
<div class="t" style="left:785.49px;top:998.05px;font-size:14px;font-weight:400;color:#2a2a2a;letter-spacing:-0.656px;transform:scaleX(0.8704);transform-origin:0 0;">OEE</div>
<svg class="r" style="left:260px;top:993px;" width="36" height="36" viewBox="0 0 36 36"><circle cx="17.9" cy="17.5" r="16" fill="#5569fc"/><polyline points="20.9,12.6 15.1,17.9 20.9,23.3" fill="none" stroke="#fff" stroke-width="2.6"/></svg>
<div class="r" style="left:1560px;top:9px;width:306px;height:36px;background:#fff;border-radius:18px;"></div>
<div class="t" style="left:1677.16px;top:19.83px;font-size:14.5px;font-weight:400;color:#222;letter-spacing:0.178px;transform:scaleX(1.0741);transform-origin:0 0;">Asset calendar</div>
<div class="r" style="left:1793.4px;top:15.6px;width:59px;height:23px;background:#e8eaea;border-radius:11.5px;"></div>
<div class="t" style="left:1821.61px;top:21.54px;font-size:10px;font-weight:400;color:#8a8d90;letter-spacing:-0.233px;transform:scaleX(0.9317);transform-origin:0 0;">OFF</div>
<div class="r" style="left:1793.4px;top:15.8px;width:22.4px;height:22.4px;background:#fff;border-radius:50%;box-shadow:0 1px 3px rgba(0,0,0,.3);"></div>
<svg class="r" style="left:1876px;top:16px;" width="24" height="24" viewBox="0 0 24 24"><path fill="#fff" d="M19.14 12.94c.04-.3.06-.61.06-.94 0-.32-.02-.64-.07-.94l2.03-1.58c.18-.14.23-.41.12-.61l-1.92-3.32c-.12-.22-.37-.29-.59-.22l-2.39.96c-.5-.38-1.03-.7-1.62-.94l-.36-2.54c-.04-.24-.24-.41-.48-.41h-3.84c-.24 0-.43.17-.47.41l-.36 2.54c-.59.24-1.13.57-1.62.94l-2.39-.96c-.22-.08-.47 0-.59.22L2.74 8.87c-.12.21-.08.47.12.61l2.03 1.58c-.05.3-.09.63-.09.94s.02.64.07.94l-2.03 1.58c-.18.14-.23.41-.12.61l1.92 3.32c.12.22.37.29.59.22l2.39-.96c.5.38 1.03.7 1.62.94l.36 2.54c.05.24.24.41.48.41h3.84c.24 0 .44-.17.47-.41l.36-2.54c.59-.24 1.13-.56 1.62-.94l2.39.96c.22.08.47 0 .59-.22l1.92-3.32c.12-.22.07-.47-.12-.61l-2.01-1.58zM12 15.6c-1.98 0-3.6-1.62-3.6-3.6s1.62-3.6 3.6-3.6 3.6 1.62 3.6 3.6-1.62 3.6-3.6 3.6z"/></svg>
<div class="r" style="left:1486px;top:9px;width:192px;height:288px;background:#fff;border-radius:22px;overflow:hidden;box-shadow:0 6px 16px rgba(0,0,0,.22);">
<div class="r" style="left:0;top:237px;width:186px;height:47px;background:#283593;"></div>
<div class="r" style="left:186px;top:15px;width:6px;height:99px;background:#a4acf5;border-radius:3px;"></div>
</div>
<div class="t" style="left:1504.57px;top:26.20px;font-size:15px;font-weight:400;color:#727a80;letter-spacing:0.480px;transform:scaleX(1.1479);transform-origin:0 0;">Custom</div>
<div class="t" style="left:1503.45px;top:73.20px;font-size:15px;font-weight:400;color:#727a80;letter-spacing:0.289px;transform:scaleX(1.1182);transform-origin:0 0;">Last hour</div>
<div class="t" style="left:1504.57px;top:120.20px;font-size:15px;font-weight:400;color:#727a80;letter-spacing:0.450px;transform:scaleX(1.1412);transform-origin:0 0;">Today</div>
<div class="t" style="left:1504.57px;top:167.40px;font-size:15px;font-weight:400;color:#727a80;letter-spacing:0.337px;transform:scaleX(1.1275);transform-origin:0 0;">Yesterday</div>
<div class="t" style="left:1503.47px;top:215.30px;font-size:15px;font-weight:400;color:#727a80;letter-spacing:0.257px;transform:scaleX(1.1062);transform-origin:0 0;">Last 7 days</div>
<div class="t" style="left:1503.47px;top:261.90px;font-size:15px;font-weight:400;color:#fff;letter-spacing:0.263px;transform:scaleX(1.1071);transform-origin:0 0;">Last 30 days</div>
</body></html>
